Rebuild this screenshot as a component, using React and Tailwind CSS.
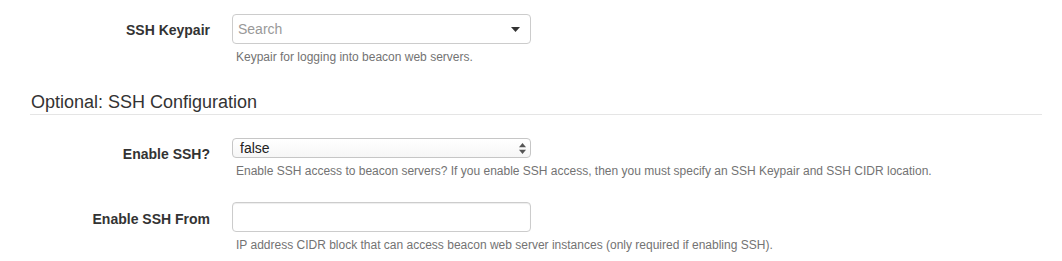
import React from "react";

function Caret() {
  return (
    <svg width="9" height="5" viewBox="0 0 9 5" className="shrink-0">
      <path d="M0 0h9L4.5 5z" fill="#333" />
    </svg>
  );
}

function UpDown() {
  return (
    <svg width="7" height="11" viewBox="0 0 7 11" className="shrink-0">
      <path d="M3.5 0L7 4.2H0z" fill="#555" />
      <path d="M3.5 11L7 6.8H0z" fill="#555" />
    </svg>
  );
}

function Row({ label, labelPad, help, children, className }) {
  return (
    <div className={`flex ${className}`}>
      <label
        className={`w-[180px] shrink-0 text-right text-[14px] leading-[20px] font-bold text-[#333] ${labelPad}`}
      >
        {label}
      </label>
      <div className="ml-[22px] flex flex-col">
        {children}
        <p className="mt-[5px] pl-[4px] text-[12px] leading-[17px] text-[#737373] whitespace-nowrap">
          {help}
        </p>
      </div>
    </div>
  );
}

export default function App() {
  return (
    <div
      className="bg-white pl-[30px] pr-[20px] pt-[14px] text-[#333]"
      style={{ fontFamily: '"Liberation Sans", Arial, sans-serif' }}
    >
      <Row
        label="SSH Keypair"
        labelPad="pt-[6px]"
        help="Keypair for logging into beacon web servers."
      >
        <div className="w-[299px] h-[30px] flex items-center justify-between rounded-[4px] border border-[#ccc] bg-white pl-[5px] pr-[10px]">
          <span className="text-[14px] text-[#999]">Search</span>
          <Caret />
        </div>
      </Row>

      <div className="mt-[24px] border-b border-[#e5e5e5]">
        <h3 className="pl-px text-[18px] leading-[24px] font-normal text-[#333]">
          Optional: SSH Configuration
        </h3>
      </div>

      <Row
        className="mt-[23px]"
        label="Enable SSH?"
        labelPad="pt-[6px]"
        help="Enable SSH access to beacon servers? If you enable SSH access, then you must specify an SSH Keypair and SSH CIDR location."
      >
        <div className="w-[299px] h-[20px] flex items-center justify-between rounded-[4px] border border-[#c6c6c6] bg-gradient-to-b from-white to-[#f6f6f6] pl-[7px] pr-[4px]">
          <span className="text-[14px] leading-[18px] text-[#222]">false</span>
          <UpDown />
        </div>
      </Row>

      <Row
        className="mt-[22px]"
        label="Enable SSH From"
        labelPad="pt-[7px]"
        help="IP address CIDR block that can access beacon web server instances (only required if enabling SSH)."
      >
        <div className="w-[299px] h-[30px] rounded-[4px] border border-[#ccc] bg-white shadow-[inset_0_1px_1px_rgba(0,0,0,0.075)]" />
      </Row>
    </div>
  );
}
